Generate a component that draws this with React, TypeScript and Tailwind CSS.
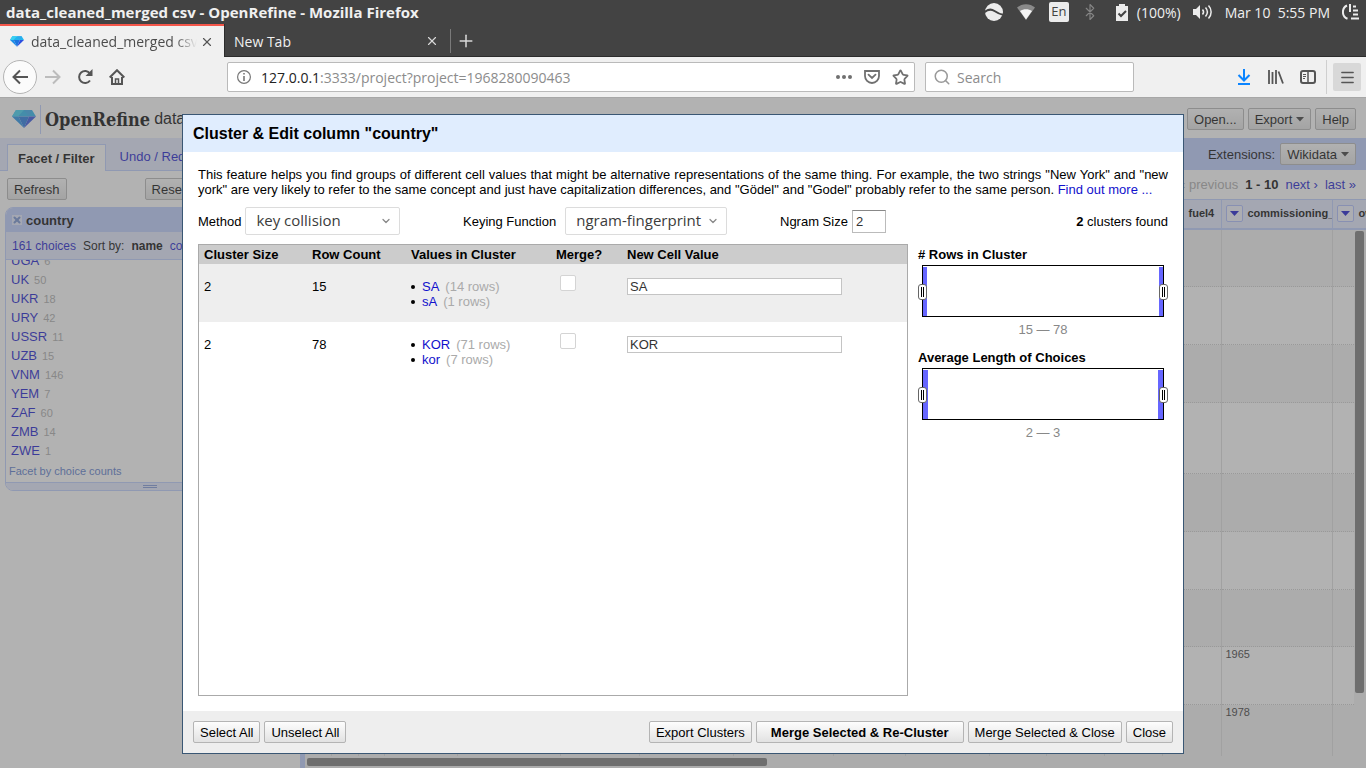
import React, { useState } from "react";
import { Bluetooth, ChevronDown, Menu, Plus, Search, Star, X } from "lucide-react";

const UI = "font-['Open_Sans','Noto_Sans',sans-serif]";

function Gem({ className }: { className: string }) {
  return (
    <svg viewBox="0 0 24 18" className={className} aria-hidden="true">
      <path d="M4 0h16l4 6.5H0z" fill="#22b4ee" />
      <path d="M4 0h8l-6 6.5H0z" fill="#39d0f2" />
      <path d="M12 0h8l-3 6.5z" fill="#2fa8ee" />
      <path d="M0 6.5h6.5L12 18z" fill="#1c8fe8" />
      <path d="M6.5 6.5h10.5L12 18z" fill="#1a74e0" />
      <path d="M17 6.5h7L12 18z" fill="#2b4fe0" />
    </svg>
  );
}

function SystemBar() {
  return (
    <div className={`flex h-6 shrink-0 items-center justify-between bg-[#434343] pl-1.5 pr-1.5 text-[#f0f0f0] ${UI}`}>
      <h1 className="text-[15px] font-bold">data_cleaned_merged csv - OpenRefine - Mozilla Firefox</h1>
      <div className="flex items-center text-[14px]">
        <svg width="18" height="18" viewBox="0 0 18 18" className="mr-3.5">
          <circle cx="9" cy="9" r="9" fill="#ececec" />
          <path d="M-1 9.500C3 6 6.500 6 9.500 8S15 11.500 19 12" fill="none" stroke="#434343" strokeWidth="2" />
        </svg>
        <svg width="18" height="16" viewBox="0 0 18 16" className="mr-3.5">
          <path d="M0 3.500C5-1 13-1 18 3.500L9 16z" fill="#8a8a8a" />
          <path d="M3 7C6.500 4.500 11.500 4.500 15 7L9 15.500z" fill="#f4f4f4" />
        </svg>
        <span className="mr-3 flex h-5 w-5 items-center justify-center rounded-xs bg-[#ececec] text-[13px] text-[#434343]">En</span>
        <Bluetooth size={18} strokeWidth={1.5} className="mr-4 text-[#858585]" />
        <svg width="14" height="17" viewBox="0 0 14 17" className="mr-2">
          <path d="M4 2V0h6v2h3v15H1V2z" fill="#ececec" />
          <path d="M3.500 9.500l2.500 2.500 5-5" fill="none" stroke="#434343" strokeWidth="2" />
        </svg>
        <span className="mr-3">(100%)</span>
        <svg width="20" height="16" viewBox="0 0 20 16" className="mr-3" fill="none" stroke="#ececec" strokeWidth="1.5">
          <path d="M0 5h3l4-4v14l-4-4H0z" fill="#ececec" stroke="none" />
          <path d="M9.500 5.500c1.300 1.500 1.300 3.500 0 5M12.500 3.500c2.300 2.700 2.300 6.300 0 9M15.500 1.500c3.500 3.700 3.500 9.300 0 13" />
        </svg>
        <span className="mr-3">Mar 10&nbsp; 5:55 PM</span>
        <svg width="18" height="16" viewBox="0 0 18 16" fill="none" stroke="#ececec" strokeWidth="2">
          <path d="M5 1.500C-.5 4-.5 12.500 5.500 14.700M8 0v8M11 2.500h3M11 6.500h5M11 10.500h5M9 14.500h8" />
        </svg>
      </div>
    </div>
  );
}

function TabStrip() {
  return (
    <div className={`flex h-[33px] shrink-0 bg-[#434343] text-[14px] ${UI}`}>
      <div className="flex w-56 items-center border-t-2 border-[#f4564a] bg-[#f0f0f0] pl-2.5 pr-2.5 text-[#4c4c4c]">
        <Gem className="mr-[7px] h-[11px] w-3.5" />
        <span className="w-[166px] overflow-hidden whitespace-nowrap [mask-image:linear-gradient(to_right,black_144px,transparent)]">
          data_cleaned_merged csv
        </span>
        <button aria-label="Close tab" className="ml-auto"><X size={14} className="text-[#555]" /></button>
      </div>
      <div className="flex w-[226px] items-center justify-between border-b border-l border-[#2c2c2c] pl-[9px] pr-[11px] pt-0.5 text-[#f0f0f0]">
        <span>New Tab</span>
        <button aria-label="Close tab"><X size={14} className="text-[#d8d8d8]" /></button>
      </div>
      <div className="flex grow items-center border-b border-[#2c2c2c] pt-0.5 text-[#d8d8d8]">
        <span className="h-6 w-px bg-[#7a7a7a]" />
        <button aria-label="Open a new tab" className="ml-[5px]"><Plus size={20} strokeWidth={1.8} /></button>
      </div>
    </div>
  );
}

function NavBar() {
  return (
    <div className={`flex h-10 shrink-0 items-center bg-[#f0f0f0] text-[14px] text-[#555] ${UI}`}>
      <button aria-label="Back" className="ml-[3px] flex h-[34px] w-[34px] items-center justify-center rounded-full border border-[#b4b4b4] bg-[#fbfbfb]">
        <svg width="16" height="16" viewBox="0 0 16 16" fill="none" stroke="#555" strokeWidth="2"><path d="M16 8H1.500M8 1.500L1.500 8 8 14.500" /></svg>
      </button>
      <button aria-label="Forward" className="ml-2">
        <svg width="16" height="16" viewBox="0 0 16 16" fill="none" stroke="#bcbcbc" strokeWidth="2"><path d="M0 8h14.500M8 1.500L14.500 8 8 14.500" /></svg>
      </button>
      <button aria-label="Reload" className="ml-4">
        <svg width="16" height="16" viewBox="0 0 16 16" fill="none" stroke="#555" strokeWidth="2">
          <path d="M13 11.500A6 6 0 1 1 13 4.500" /><path d="M15.500 0v7h-7z" fill="#555" stroke="none" />
        </svg>
      </button>
      <button aria-label="Home" className="ml-4">
        <svg width="16" height="16" viewBox="0 0 16 16" fill="none" stroke="#555" strokeWidth="2">
          <path d="M.7 8.500L8 1.200l7.300 7.300M3 8v7h10V8" /><path d="M6.500 15v-5h3v5" strokeWidth="1.500" />
        </svg>
      </button>
      <div className="ml-[102px] flex h-[30px] w-[688px] items-center rounded-xs border border-[#bababa] bg-white pl-[9px] pr-[5px]">
        <svg width="14" height="14" viewBox="0 0 14 14" className="mr-2.5 shrink-0" fill="none" stroke="#777">
          <circle cx="7" cy="7" r="6.400" strokeWidth="1.200" /><path d="M7 6v5M7 3v1.600" strokeWidth="1.600" />
        </svg>
        <span className="grow text-[#222]">127.0.0.1<span className="text-[#8c8c8c]">:3333/project?project=1968280090463</span></span>
        <svg width="16" height="4" viewBox="0 0 16 4" className="mr-3" fill="#707070"><circle cx="2" cy="2" r="2" /><circle cx="8" cy="2" r="2" /><circle cx="14" cy="2" r="2" /></svg>
        <svg width="16" height="14" viewBox="0 0 16 14" className="mr-3" fill="none" stroke="#707070" strokeWidth="1.800">
          <path d="M1 1h14v5a7 7 0 0 1-14 0z" /><path d="M4.500 4.700L8 8l3.500-3.300" strokeLinecap="round" />
        </svg>
        <Star size={17} strokeWidth={2.5} className="text-[#707070]" />
      </div>
      <label className="ml-2.5 flex h-[30px] w-[209px] items-center rounded-xs border border-[#bababa] bg-white pl-[7px]">
        <Search size={18} className="mr-1.5 shrink-0 text-[#999]" />
        <input aria-label="Search" placeholder="Search" className="w-full min-w-0 outline-none placeholder:text-[#8c8c8c]" />
      </label>
      <div className="ml-auto flex items-center">
        <button aria-label="Downloads" className="mr-[17px]">
          <svg width="14" height="16" viewBox="0 0 14 16" fill="none" stroke="#0a84ff" strokeWidth="2"><path d="M7 0v11M1.500 6L7 11.500 12.500 6M1 15h12" /></svg>
        </button>
        <button aria-label="Library" className="mr-4">
          <svg width="16" height="14" viewBox="0 0 16 14" fill="none" stroke="#555" strokeWidth="1.800"><path d="M1 0v14M4.500 2v12M8 0v14M10.500 1.500L15 13.500" /></svg>
        </button>
        <button aria-label="Sidebars" className="mr-2.5">
          <svg width="16" height="14" viewBox="0 0 16 14" fill="none" stroke="#555"><rect x="1" y="1" width="14" height="12" rx="2" strokeWidth="2" /><path d="M8 1v12" strokeWidth="1.500" /><path d="M3 4.500h3M3 6.500h3M3 8.500h2" /></svg>
        </button>
        <span className="h-[34px] w-px bg-[#cfcfcf]" />
        <button aria-label="Open menu" className="ml-1.5 mr-[5px] flex h-7 w-7 items-center justify-center rounded-xs bg-[#d8d8d8]"><Menu size={17} /></button>
      </div>
    </div>
  );
}

function Button({ children, wide }: { children: React.ReactNode; wide?: boolean }) {
  return (
    <button
      className={`flex h-[22px] items-center rounded-xs border border-[#b4b4b4] bg-linear-to-b from-[#fdfdfd] to-[#e2e2e2] whitespace-nowrap ${
        wide ? "px-3.5 font-bold" : "px-1.5"
      }`}
    >
      {children}
    </button>
  );
}

function Caret() {
  return (
    <svg width="8" height="5" viewBox="0 0 8 5" className="ml-1" fill="#333"><path d="M0 0h8L4 4.500z" /></svg>
  );
}

const choices: [string, number][] = [
  ["UGA", 6], ["UK", 50], ["UKR", 18], ["URY", 42], ["USSR", 11], ["UZB", 15],
  ["VNM", 146], ["YEM", 7], ["ZAF", 60], ["ZMB", 14], ["ZWE", 1],
];

function FacetPanel() {
  return (
    <aside className="flex w-[300px] shrink-0 flex-col">
      <div className="flex h-[33px] shrink-0 items-end border-b border-[#bbccff] bg-[#e3e9ff] pl-[7px]">
        <a href="#facets" className="-mb-px flex h-[27px] items-center border border-b-0 border-[#bbccff] bg-white px-2.5 font-bold">Facet / Filter</a>
        <a href="#history" className="flex h-[27px] items-center pl-3.5 text-[#1111cc]">Undo / Redo</a>
      </div>
      <div className="flex items-center pl-[7px] pt-[7px]">
        <Button>Refresh</Button>
        <span className="ml-[78px]"><Button>Reset All</Button></span>
      </div>
      <section className="ml-[5px] mr-[5px] mt-[7px] overflow-hidden rounded-lg border border-[#bbccff]">
        <h2 className="flex h-6 items-center bg-[#bbccff] pl-1.5 font-bold">
          <button aria-label="Remove facet" className="mr-1 flex h-2.5 w-2.5 items-center justify-center bg-[#e3e9ff] text-[#6f8ed0]"><X size={10} strokeWidth={5} /></button>
          country
        </h2>
        <div className="flex h-7 items-center gap-[7px] border-b border-[#bbccff] bg-[#e3e9ff] pl-1.5 text-xs">
          <a href="#choices" className="text-[#1111cc]">161 choices</a>
          <span>Sort by:</span>
          <b>name</b>
          <a href="#count" className="text-[#1111cc]">count</a>
        </div>
        <ul className="flex h-[200px] flex-col justify-end overflow-hidden pl-[5px]">
          {choices.map(([name, count]) => (
            <li key={name} className="h-[19px] shrink-0 leading-[19px]">
              <a href={`#${name}`} className="text-[#1111cc]">{name}</a>
              <span className="ml-[5px] text-[11px] text-[#aaa]">{count}</span>
            </li>
          ))}
        </ul>
        <a href="#counts" className="flex h-[22px] items-center pl-[3px] text-[11px] text-[#5577cc]">Facet by choice counts</a>
        <div className="flex h-2 items-center justify-center border-t border-[#bbccff] bg-[#e3e9ff]">
          <span className="h-[3px] w-3.5 border-y border-[#7a94d8]" />
        </div>
      </section>
    </aside>
  );
}

const gridRows = [
  { h: "h-[58px]", year: "" }, { h: "h-[58px]", year: "" }, { h: "h-[58px]", year: "" },
  { h: "h-[71px]", year: "" }, { h: "h-[58px]", year: "" }, { h: "h-[58px]", year: "" },
  { h: "h-[57px]", year: "" }, { h: "h-[58px]", year: "1965" }, { h: "h-[58px]", year: "1978" },
];
const gridWidths = [26, 27, 26, 73, 103, 79, 94, 100, 72, 84, 57, 58, 58, 59, 111, 100];
const gridHeads: Record<number, string> = { 13: "fuel4", 14: "commissioning_year", 15: "owner" };

function DataGrid() {
  return (
    <main className="flex min-w-0 grow flex-col border-l-[5px] border-[#bbccff]">
      <div className="flex h-8 shrink-0 items-center justify-end gap-[5px] bg-[#bbccff] pr-2.5">
        Extensions:
        <Button>Wikidata <Caret /></Button>
      </div>
      <div className="flex h-[29px] shrink-0 items-center justify-end gap-[7px] pr-2.5">
        <span className="text-[#aaa]">‹ previous</span>
        <b>1 - 10</b>
        <a href="#next" className="text-[#1111cc]">next ›</a>
        <a href="#last" className="text-[#1111cc]">last »</a>
      </div>
      <div className="relative min-h-0 grow overflow-hidden">
        <table className="w-[1127px] table-fixed border-collapse text-[11px]">
          <colgroup>{gridWidths.map((w, i) => <col key={i} style={{ width: w }} />)}</colgroup>
          <thead>
            <tr className="h-[29px] border-b-2 border-t border-[#bbccff] bg-[#e3e9ff]">
              {gridWidths.map((_, i) => (
                <th key={i} className="overflow-hidden border-r border-[#bbccff] p-0 text-left">
                  {gridHeads[i] && (
                    <span className="flex items-center gap-[5px] pl-1">
                      <button aria-label="Column menu" className="flex h-[17px] w-[17px] shrink-0 items-center justify-center rounded-xs border border-[#aabbff] bg-[#f2f5ff]">
                        <svg width="9" height="5" viewBox="0 0 9 5" fill="#1111cc"><path d="M0 0h9L4.500 5z" /></svg>
                      </button>
                      {gridHeads[i]}
                    </span>
                  )}
                </th>
              ))}
            </tr>
          </thead>
          <tbody>
            {gridRows.map((r, n) => (
              <tr key={n} className={`${r.h} border-b border-dotted border-[#ccc] odd:bg-[#f2f2f2]`}>
                {gridWidths.map((_, i) => (
                  <td key={i} className="border-r border-solid border-[#ddd] px-1 py-0 align-top text-[#333]">{i === 14 ? r.year : ""}</td>
                ))}
              </tr>
            ))}
          </tbody>
        </table>
        <div className="absolute bottom-0 right-0 top-[31px] w-3 bg-[#f2f2f2] pt-px">
          <div className="ml-px h-[462px] w-[9px] rounded-xs bg-[#777]" />
        </div>
      </div>
      <div className="h-3 shrink-0 bg-[#f2f2f2] pl-0.5 pt-0.5">
        <div className="h-2 w-[460px] rounded-xs bg-[#777]" />
      </div>
    </main>
  );
}

function PickList({ id, value, width }: { id: string; value: string; width: string }) {
  return (
    <span className={`relative ${width}`}>
      <select id={id} className={`block h-7 w-full appearance-none rounded-xs border border-[#dcdcdc] bg-white pb-0.5 pl-2.5 text-[15px] leading-6 text-[#3c3c3c] ${UI}`}>
        <option>{value}</option>
      </select>
      <ChevronDown size={12} strokeWidth={2.5} className="pointer-events-none absolute right-2 top-2 text-[#888]" />
    </span>
  );
}

const thumb =
  "pointer-events-none absolute inset-x-0 top-[19px] h-4 w-full appearance-none bg-transparent [&::-webkit-slider-thumb]:pointer-events-auto [&::-webkit-slider-thumb]:h-4 [&::-webkit-slider-thumb]:w-[9px] [&::-webkit-slider-thumb]:appearance-none [&::-webkit-slider-thumb]:rounded-[3px] [&::-webkit-slider-thumb]:border [&::-webkit-slider-thumb]:border-[#666] [&::-webkit-slider-thumb]:bg-white [&::-webkit-slider-thumb]:bg-[linear-gradient(to_right,transparent_2px,#000_2px,#000_3px,transparent_3px,transparent_4px,#000_4px,#000_5px,transparent_5px)] [&::-webkit-slider-thumb]:bg-size-[7px_10px] [&::-webkit-slider-thumb]:bg-[position:0_2px] [&::-webkit-slider-thumb]:bg-no-repeat";

function RangeFacet({ title, min, max, bar }: { title: string; min: number; max: number; bar: string }) {
  return (
    <section className="pb-2.5">
      <h3 className="pt-[3px] pb-[3px] font-bold">{title}</h3>
      <div className="relative">
        <div className="mx-1 flex h-[52px] justify-between border border-black pt-px">
          <span className={`${bar} bg-[#6666ff]`} />
          <span className={`${bar} bg-[#6666ff]`} />
        </div>
        <input type="range" aria-label={`${title} from`} min={min} max={max} defaultValue={min} className={thumb} />
        <input type="range" aria-label={`${title} to`} min={min} max={max} defaultValue={max} className={thumb} />
      </div>
      <p className="pt-[5px] text-center text-[#888]">{min} — {max}</p>
    </section>
  );
}

const clusters = [
  { size: 2, rows: 15, values: [["SA", 14], ["sA", 1]], cell: "SA" },
  { size: 2, rows: 78, values: [["KOR", 71], ["kor", 7]], cell: "KOR" },
];

function ClusterTable() {
  const [cells, setCells] = useState(clusters.map((c) => c.cell));
  return (
    <div className="h-[452px] w-[710px] shrink-0 border border-[#aaa]">
      <table className="w-full table-fixed border-collapse text-left">
        <colgroup>
          <col className="w-[108px]" /><col className="w-[99px]" /><col className="w-[145px]" /><col className="w-[71px]" /><col />
        </colgroup>
        <thead>
          <tr className="h-[19px] bg-[#ccc]">
            {["Cluster Size", "Row Count", "Values in Cluster", "Merge?", "New Cell Value"].map((h) => (
              <th key={h} className="px-[5px] py-0">{h}</th>
            ))}
          </tr>
        </thead>
        <tbody>
          {clusters.map((c, n) => (
            <tr key={n} className="h-[58px] align-top odd:bg-[#eee]">
              <td className="px-[5px] pt-[15px]">{c.size}</td>
              <td className="px-[5px] pt-[15px]">{c.rows}</td>
              <td className="px-[5px] pt-[15px]">
                <ul className="list-disc pl-[15px]">
                  {c.values.map(([v, k]) => (
                    <li key={v}>
                      <a href={`#${v}`} className="-ml-1 text-[#1111cc]">{v}</a>
                      <span className="ml-1.5 text-[#aaa]">({k} rows)</span>
                    </li>
                  ))}
                </ul>
              </td>
              <td className="px-[9px] pt-[11px]">
                <input type="checkbox" aria-label={`Merge ${c.cell}`} className="block h-4 w-4 appearance-none rounded-xs border border-[#d4d4d4] bg-white checked:bg-[#1111cc]" />
              </td>
              <td className="px-[5px] pt-3.5">
                <input
                  aria-label={`New cell value for ${c.cell}`}
                  value={cells[n]}
                  onChange={(e) => setCells(cells.map((v, i) => (i === n ? e.target.value : v)))}
                  className="block h-[17px] w-[215px] border border-[#c4c4c4] bg-white px-0.5 text-[#333]"
                />
              </td>
            </tr>
          ))}
        </tbody>
      </table>
    </div>
  );
}

function ClusterDialog() {
  return (
    <div role="dialog" aria-label="Cluster and edit" className="flex w-[1002px] flex-col border border-[#3a5774] bg-white">
      <h2 className="flex h-[37px] items-center bg-[#e0edfe] px-2.5 text-base font-bold">Cluster &amp; Edit column "country"</h2>
      <div className="px-[15px] py-[15px]">
        <p className="text-justify">
          This feature helps you find groups of different cell values that might be alternative representations of the same thing. For example, the two strings "New York" and "new york" are very likely to refer to the same concept and just have capitalization differences, and "Gödel" and "Godel" probably refer to the same person.{" "}
          <a href="#more" className="text-[#1111cc]">Find out more ...</a>
        </p>
        <div className="mt-2.5 grid grid-cols-[265px_317px_1fr_auto] items-center">
          <div className="flex items-center gap-1">
            <label htmlFor="method">Method</label>
            <PickList id="method" value="key collision" width="w-[155px]" />
          </div>
          <div className="flex items-center gap-[9px]">
            <label htmlFor="keyer">Keying Function</label>
            <PickList id="keyer" value="ngram-fingerprint" width="w-[162px]" />
          </div>
          <div className="flex items-center gap-1">
            <label htmlFor="ngram">Ngram Size</label>
            <input id="ngram" defaultValue="2" className="h-[23px] w-[34px] border border-[#bbb] border-t-[#888] px-[3px] text-[#333]" />
          </div>
          <p><b>2</b> clusters found</p>
        </div>
        <div className="mt-[9px] flex gap-2.5">
          <ClusterTable />
          <div className="min-w-0 grow">
            <RangeFacet title="# Rows in Cluster" min={15} max={78} bar="w-1" />
            <RangeFacet title="Average Length of Choices" min={2} max={3} bar="w-[5px]" />
          </div>
        </div>
      </div>
      <footer className="flex h-[42px] items-center gap-1 bg-[#eee] px-2.5">
        <Button>Select All</Button>
        <Button>Unselect All</Button>
        <span className="grow" />
        <Button>Export Clusters</Button>
        <Button wide>Merge Selected &amp; Re-Cluster</Button>
        <Button>Merge Selected &amp; Close</Button>
        <Button>Close</Button>
      </footer>
    </div>
  );
}

export default function App() {
  return (
    <div className="flex h-screen flex-col overflow-hidden">
      <SystemBar />
      <TabStrip />
      <NavBar />
      <div className="relative flex min-h-0 grow flex-col bg-white font-['Liberation_Sans',Arial,sans-serif] text-[13px] leading-[15px] text-black">
        <header className="flex h-[41px] shrink-0 items-center gap-1 border-t border-[#e8e8e8] pl-3 pr-2.5 pt-0.5">
          <Gem className="h-[18px] w-6" />
          <span className="h-[29px] w-px bg-[#bbccff]" />
          <span className="font-['DejaVu_Serif_Condensed','DejaVu_Serif',serif] text-[18px] font-bold">OpenRefine</span>
          <span className="grow text-base">data</span>
          <Button>Open...</Button>
          <Button>Export <Caret /></Button>
          <Button>Help</Button>
        </header>
        <div className="flex min-h-0 grow">
          <FacetPanel />
          <DataGrid />
        </div>
        <div className="absolute inset-0 flex items-center justify-center bg-[#666]/50 pt-[3px]">
          <ClusterDialog />
        </div>
      </div>
    </div>
  );
}
